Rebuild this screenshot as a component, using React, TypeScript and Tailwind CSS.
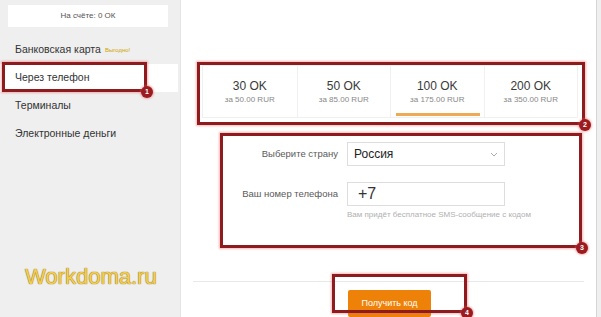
import React from 'react';

const tabs = [
  { ok: '30 OK', price: 'за 50.00 RUR' },
  { ok: '50 OK', price: 'за 85.00 RUR' },
  { ok: '100 OK', price: 'за 175.00 RUR', active: true },
  { ok: '200 OK', price: 'за 350.00 RUR' },
];

const menu = ['Банковская карта', 'Через телефон', 'Терминалы', 'Электронные деньги'];

// red marker frame drawn over the screenshot
const Mark: React.FC<{ x: number; y: number; w: number; h: number; n: number }> = ({ x, y, w, h, n }) => (
  <>
    <div
      className="absolute border-[3px] border-[#8e1b1e] shadow-[0_0_2px_1px_rgba(230,90,90,0.45)] pointer-events-none"
      style={{ left: x, top: y, width: w, height: h }}
    />
    <div
      className="absolute w-[12px] h-[12px] rounded-full bg-[#9a1c20] text-white text-[7px] font-bold flex items-center justify-center shadow-[0_0_2px_1px_rgba(230,90,90,0.45)]"
      style={{ left: x + w - 6, top: y + h - 6 }}
    >
      {n}
    </div>
  </>
);

export default function App() {
  return (
    <div className="relative w-[601px] h-[317px] overflow-hidden flex bg-[#efefef] font-['Liberation_Sans',Arial,sans-serif]">
      {/* Sidebar */}
      <div className="w-[180px] flex flex-col pt-[5px]">
        <div className="mx-[8px] w-[160px] h-[22px] bg-white flex items-center justify-center text-[8px] text-[#555]">
          На счёте: 0 ОК
        </div>
        <div className="mt-[9px] flex flex-col">
          {menu.map((m, i) => (
            <div
              key={m}
              className={`h-[28px] flex items-center pl-[15px] text-[10.5px] text-[#333] ${i === 1 ? 'bg-white w-[178px]' : ''}`}
            >
              {m}
              {i === 0 && <span className="ml-[4px] text-[6px] text-[#d0a500]">Выгодно!</span>}
            </div>
          ))}
        </div>
        <div className="mt-[118px] pl-[25px] text-[22px] leading-none text-[#f3cd55] [text-shadow:0_0_1px_#9a7608,0_0_1px_#9a7608]">
          Workdoma.ru
        </div>
      </div>

      {/* Main */}
      <div className="w-[417px] bg-white border-l border-[#e4e4e4] border-r border-r-[#d6d6d6] flex flex-col">
        <div className="ml-[21px] mt-[65px] w-[376px] h-[55px] grid grid-cols-4 border border-[#f0f0f0]">
          {tabs.map((t, i) => (
            <div
              key={t.ok}
              className={`relative flex flex-col items-center pt-[12px] ${i > 0 ? 'border-l border-[#f0f0f0]' : ''}`}
            >
              <div className="text-[12px] leading-[16px] text-[#3a3a3a]">{t.ok}</div>
              <div className="mt-[1px] text-[8px] leading-[10px] text-[#888]">{t.price}</div>
              {t.active && <div className="absolute left-[5px] right-[4px] bottom-[1px] h-[3px] bg-[#eeaa55]" />}
            </div>
          ))}
        </div>

        <div className="ml-[21px] mt-[24px] grid grid-cols-[136px_158px] gap-x-[9px] items-center">
          <div className="text-right text-[9.5px] text-[#5a5a5a]">Выберите страну</div>
          <div className="h-[24px] border border-[#dedede] flex items-center justify-between pl-[6px] pr-[6px] text-[12px] text-[#222]">
            Россия
            <svg width="8" height="5" viewBox="0 0 8 5" className="text-[#aaa]">
              <path d="M1 1l3 3 3-3" fill="none" stroke="currentColor" strokeWidth="1" />
            </svg>
          </div>
          <div className="mt-[16px] text-right text-[9.5px] text-[#5a5a5a]">Ваш номер телефона</div>
          <div className="mt-[16px] h-[24px] border border-[#dedede] flex items-center pl-[10px] text-[16px] text-[#333]">
            +7
          </div>
          <div />
          <div className="mt-[4px] text-[8px] leading-[10px] text-[#b0b0b0] whitespace-nowrap">
            Вам придёт бесплатное SMS-сообщение с кодом
          </div>
        </div>

        <div className="mx-[12px] mt-[61px] border-t border-[#e8e8e8]" />
        <div className="ml-[167px] mt-[8px] w-[83px] h-[28px] bg-[#ee8208] rounded-[2px] flex items-center justify-center text-[9px] text-white">
          Получить код
        </div>
      </div>
      <div className="flex-1 bg-[#efefef]" />

      <Mark x={2} y={62} w={145} h={30} n={1} />
      <Mark x={197} y={62} w={388} h={63} n={2} />
      <Mark x={220} y={133} w={362} h={115} n={3} />
      <Mark x={332} y={274} w={135} h={39} n={4} />
    </div>
  );
}
